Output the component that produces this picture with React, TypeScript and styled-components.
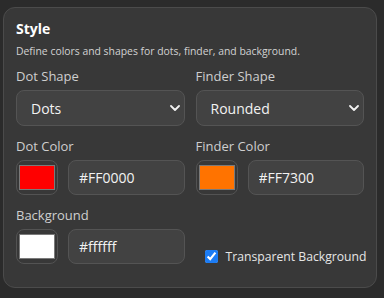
import React from "react";
import styled, { createGlobalStyle } from "styled-components";

const Global = createGlobalStyle`
  html, body { margin: 0; padding: 0; background: #2b2b2b; }
  body { font-family: "Open Sans", "Noto Sans", sans-serif; }
  * { box-sizing: border-box; }
`;

const Page = styled.div`
  padding: 7px 0 0 3px;
  width: 384px;
  height: 298px;
`;

const Card = styled.section`
  width: 374px;
  height: 281px;
  background: #383838;
  border: 1px solid #4b4b4b;
  border-radius: 12px;
  padding: 12px 12px 0 12px;
  display: flex;
  flex-direction: column;
`;

const Title = styled.h2`
  margin: 0;
  font-size: 14px;
  line-height: 18px;
  font-weight: 700;
  color: #ffffff;
`;

const Subtitle = styled.p`
  margin: 6px 0 0 0;
  font-size: 10.4px;
  line-height: 15px;
  color: #d2d2d2;
`;

const Grid = styled.div`
  margin-top: 8px;
  display: grid;
  grid-template-columns: minmax(0, 1fr) minmax(0, 1fr);
  column-gap: 11px;
  row-gap: 11px;
`;

const Field = styled.div`
  display: flex;
  flex-direction: column;
  gap: 5px;
  min-width: 0;
`;

const Label = styled.label`
  font-size: 13px;
  line-height: 18px;
  color: #cfcfcf;
`;

const SelectWrap = styled.div`
  display: grid;
  align-items: center;
`;

const Select = styled.select`
  grid-area: 1 / 1;
  appearance: none;
  width: 100%;
  min-width: 0;
  height: 36px;
  background: #424242;
  border: 1px solid #545454;
  border-radius: 8px;
  color: #f2f2f2;
  font-family: "Open Sans", "Noto Sans", sans-serif;
  font-size: 14px;
  padding: 0 24px 0 14px;
  outline: none;
`;

const Chevron = styled.svg`
  grid-area: 1 / 1;
  justify-self: end;
  margin-right: 5px;
  pointer-events: none;
`;

const ColorRow = styled.div`
  display: flex;
  gap: 10px;
`;

const Swatch = styled.div`
  flex: 0 0 42px;
  height: 35px;
  border: 1px solid #535353;
  border-radius: 8px;
  background: #383838;
  padding: 4px 2px;
  display: flex;
`;

const SwatchFill = styled.div<{ $color: string }>`
  flex: 1;
  background: ${(p) => p.$color};
  border: 1px solid #7a7a7a;
`;

const HexInput = styled.input`
  flex: 1;
  min-width: 0;
  width: 100%;
  height: 35px;
  background: #424242;
  border: 1px solid #545454;
  border-radius: 8px;
  color: #f2f2f2;
  font-family: "Open Sans", "Noto Sans", sans-serif;
  font-size: 14px;
  padding: 0 10px;
  outline: none;
`;

const CheckCell = styled.label`
  align-self: end;
  display: flex;
  align-items: center;
  gap: 8px;
  padding-left: 9px;
  margin-bottom: 1px;
  height: 14px;
  font-size: 12.2px;
  color: #e6e6e6;
  white-space: nowrap;
`;

const Check = styled.input`
  margin: 0;
  width: 13px;
  height: 13px;
  accent-color: #1c7cf4;
`;

function ChevronIcon() {
  return (
    <Chevron width="10" height="6" viewBox="0 0 10 6" fill="none">
      <path d="M1 1L5 5L9 1" stroke="#f2f2f2" strokeWidth="1.8" strokeLinecap="round" strokeLinejoin="round" />
    </Chevron>
  );
}

function ShapeSelect({ label, value, options }: { label: string; value: string; options: string[] }) {
  return (
    <Field>
      <Label>{label}</Label>
      <SelectWrap>
        <Select defaultValue={value}>
          {options.map((o) => (
            <option key={o}>{o}</option>
          ))}
        </Select>
        <ChevronIcon />
      </SelectWrap>
    </Field>
  );
}

function ColorField({ label, color, hex }: { label: string; color: string; hex: string }) {
  return (
    <Field>
      <Label>{label}</Label>
      <ColorRow>
        <Swatch>
          <SwatchFill $color={color} />
        </Swatch>
        <HexInput defaultValue={hex} />
      </ColorRow>
    </Field>
  );
}

export default function App() {
  return (
    <>
      <Global />
      <Page>
        <Card>
          <Title>Style</Title>
          <Subtitle>Define colors and shapes for dots, finder, and background.</Subtitle>
          <Grid>
            <ShapeSelect label="Dot Shape" value="Dots" options={["Dots", "Squares", "Rounded"]} />
            <ShapeSelect label="Finder Shape" value="Rounded" options={["Square", "Rounded", "Dots"]} />
            <ColorField label="Dot Color" color="#FF0000" hex="#FF0000" />
            <ColorField label="Finder Color" color="#FF7300" hex="#FF7300" />
            <ColorField label="Background" color="#ffffff" hex="#ffffff" />
            <CheckCell>
              <Check type="checkbox" defaultChecked />
              Transparent Background
            </CheckCell>
          </Grid>
        </Card>
      </Page>
    </>
  );
}
